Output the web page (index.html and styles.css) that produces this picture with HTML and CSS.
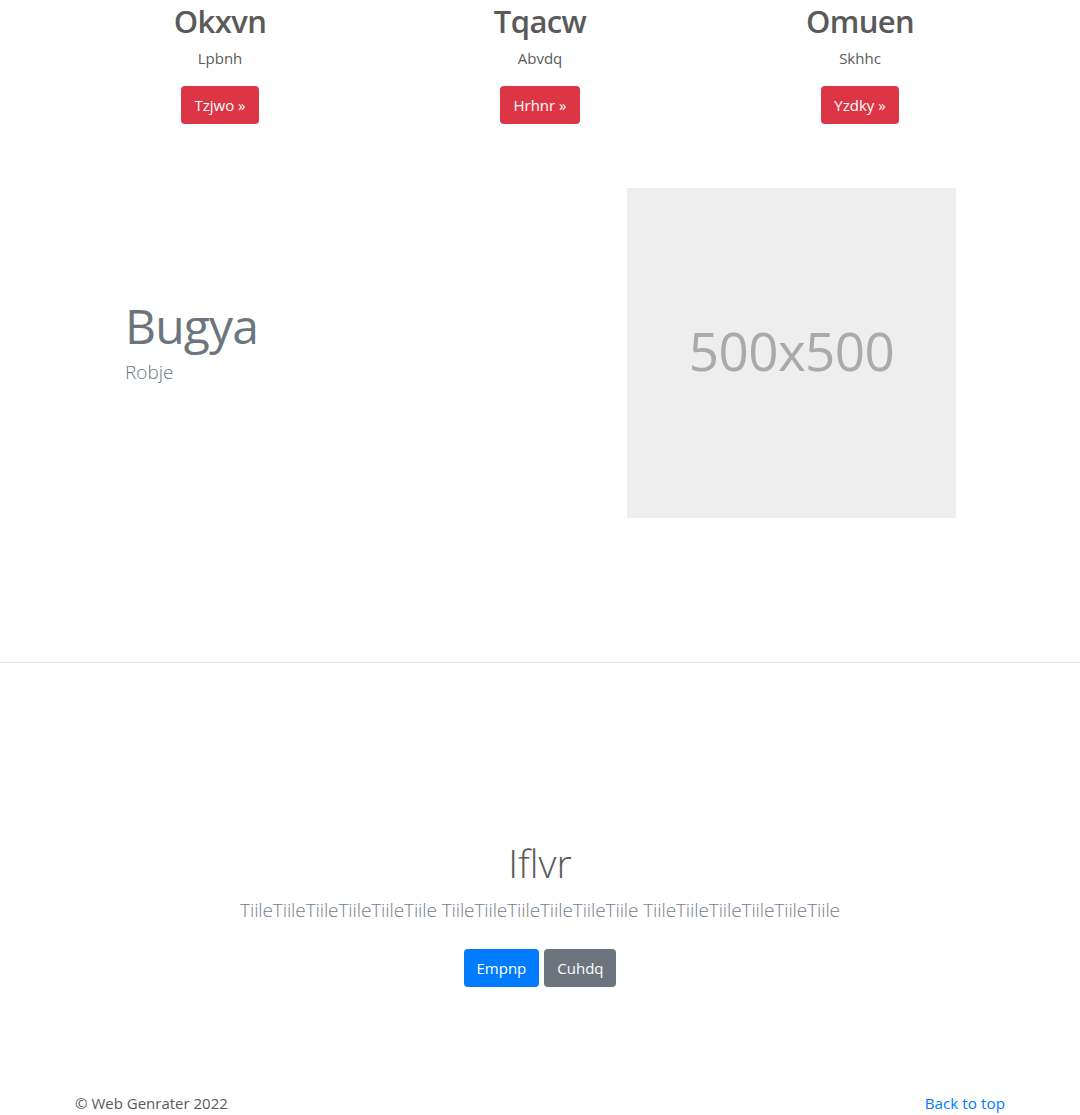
FILE: index.html
```html
<!DOCTYPE html>
<html lang="en">
<head>
<meta charset="utf-8">
<title>Web Genrater</title>
<link rel="stylesheet" href="styles.css">
</head>
<body>
<main>
  <div class="container">
    <div class="marketing">
      <div class="col">
        <h2 class="col-title">Okxvn</h2>
        <p class="col-text">Lpbnh</p>
        <a class="btn btn-danger" href="#">Tzjwo &raquo;</a>
      </div>
      <div class="col">
        <h2 class="col-title">Tqacw</h2>
        <p class="col-text">Abvdq</p>
        <a class="btn btn-danger" href="#">Hrhnr &raquo;</a>
      </div>
      <div class="col">
        <h2 class="col-title">Omuen</h2>
        <p class="col-text">Skhhc</p>
        <a class="btn btn-danger" href="#">Yzdky &raquo;</a>
      </div>
    </div>

    <div class="featurette">
      <div class="feat-text">
        <h2 class="feat-heading">Bugya</h2>
        <p class="feat-lead">Robje</p>
      </div>
      <div class="feat-img">500x500</div>
    </div>
  </div>

  <hr class="divider">

  <section class="jumbo">
    <h1 class="jumbo-heading">Iflvr</h1>
    <p class="jumbo-lead">TiileTiileTiileTiileTiileTiile TiileTiileTiileTiileTiileTiile TiileTiileTiileTiileTiileTiile</p>
    <div class="jumbo-actions">
      <a class="btn btn-primary" href="#">Empnp</a>
      <a class="btn btn-secondary" href="#">Cuhdq</a>
    </div>
  </section>

  <footer class="container footer">
    <p class="copy">&copy; Web Genrater 2022</p>
    <a class="top-link" href="#">Back to top</a>
  </footer>
</main>
</body>
</html>
```

FILE: styles.css
```css
* { box-sizing: border-box; }

html, body {
  margin: 0;
  padding: 0;
  background: #fff;
}

body {
  font-family: "Open Sans", "Noto Sans", "Liberation Sans", sans-serif;
  font-size: 16px;
  line-height: 1.5;
  color: #5a5a5a;
}

.container {
  width: 960px;
  margin: 0 auto;
}

/* three marketing columns */
.marketing {
  display: grid;
  grid-template-columns: repeat(3, 1fr);
  text-align: center;
}

.col { padding: 0 15px; }

.col-title {
  margin: 0 0 4px;
  font-size: 31px;
  font-weight: 600;
  line-height: 42px;
  letter-spacing: -0.6px;
}

.col-text {
  margin: 0 0 16px;
  font-size: 15px;
  line-height: 24px;
}

.btn {
  display: inline-block;
  padding: 6px 13px;
  font-size: 15px;
  line-height: 26px;
  border-radius: 4px;
  color: #fff;
  text-decoration: none;
  vertical-align: top;
}

.btn-danger { background: #dc3545; }
.btn-primary { background: #007bff; }
.btn-secondary { background: #6c757d; }

/* featurette */
.featurette {
  display: flex;
  align-items: center;
  margin-top: 64px;
}

.feat-text {
  flex: 1;
  padding-left: 65px;
}

.feat-heading {
  margin: 0 0 7px;
  font-size: 48px;
  font-weight: 400;
  line-height: 1;
  letter-spacing: -0.8px;
  color: #6c757d;
}

.feat-lead {
  margin: 0 0 18px;
  font-size: 19px;
  font-weight: 300;
  line-height: 30px;
  color: #6c757d;
}

.feat-img {
  width: 329px;
  height: 330px;
  margin-right: 64px;
  background: #eee;
  color: #aaa;
  font-size: 53px;
  display: flex;
  align-items: center;
  justify-content: center;
  letter-spacing: -0.6px;
  padding-bottom: 4px;
}

.divider {
  margin: 144px 0 0;
  border: 0;
  border-top: 1px solid #e5e5e5;
  height: 0;
}

/* jumbotron */
.jumbo {
  text-align: center;
  padding-top: 176px;
}

.jumbo-heading {
  margin: 0 0 8px;
  font-size: 39px;
  font-weight: 300;
  line-height: 48px;
  color: #5a5a5a;
}

.jumbo-lead {
  margin: 0 0 24px;
  font-size: 19px;
  font-weight: 300;
  line-height: 30px;
  color: #74808c;
  letter-spacing: -0.1px;
}

.jumbo-actions {
  display: flex;
  justify-content: center;
  gap: 5px;
}

/* footer */
.footer {
  display: flex;
  justify-content: space-between;
  padding: 0 15px;
  margin-top: 104px;
}

.copy {
  margin: 0;
  font-size: 15px;
  line-height: 24px;
}

.top-link {
  font-size: 15.3px;
  line-height: 24px;
  color: #007bff;
  text-decoration: none;
}
```
